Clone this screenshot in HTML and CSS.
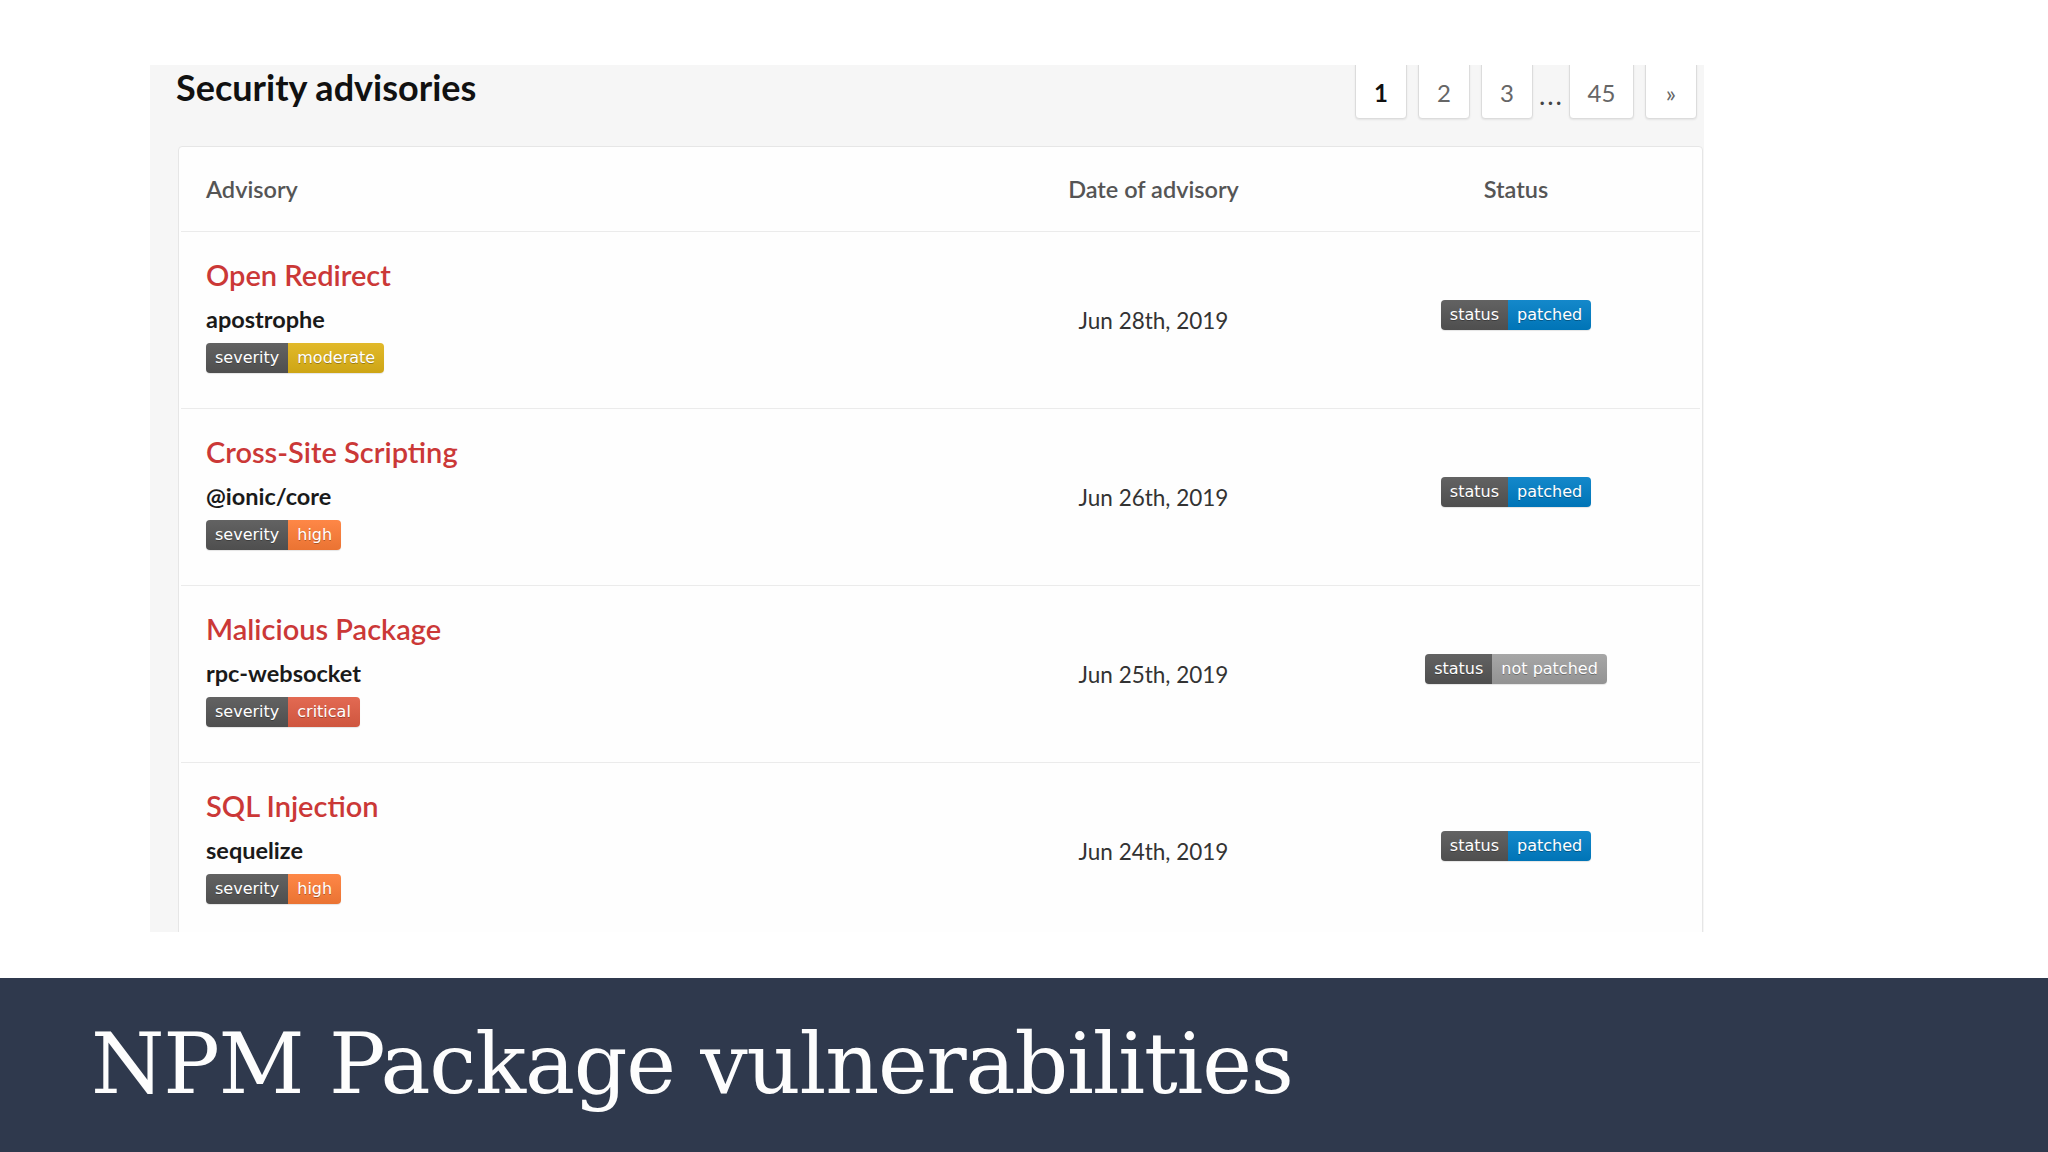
FILE: index.html
```html
<!DOCTYPE html>
<html lang="en">
<head>
<meta charset="utf-8">
<title>NPM Package vulnerabilities</title>
<link rel="stylesheet" href="styles.css">
</head>
<body>
<div class="stage">
  <section class="panel">
    <div class="panel-head">
      <h1 class="title">Security advisories</h1>
      <nav class="pager">
        <a class="page current">1</a>
        <a class="page">2</a>
        <a class="page">3</a>
        <span class="ellipsis">...</span>
        <a class="page wide">45</a>
        <a class="page">»</a>
      </nav>
    </div>
    <div class="card">
      <div class="row head">
        <div class="cell adv">Advisory</div>
        <div class="cell center">Date of advisory</div>
        <div class="cell center">Status</div>
      </div>

      <div class="row item">
        <div class="cell adv">
          <div class="adv-title">Open Redirect</div>
          <div class="adv-pkg">apostrophe</div>
          <span class="badge"><span class="badge-key">severity</span><span class="badge-val moderate">moderate</span></span>
        </div>
        <div class="cell center date">Jun 28th, 2019</div>
        <div class="cell center"><span class="badge status"><span class="badge-key">status</span><span class="badge-val patched">patched</span></span></div>
      </div>

      <div class="row item">
        <div class="cell adv">
          <div class="adv-title">Cross-Site Scripting</div>
          <div class="adv-pkg">@ionic/core</div>
          <span class="badge"><span class="badge-key">severity</span><span class="badge-val high">high</span></span>
        </div>
        <div class="cell center date">Jun 26th, 2019</div>
        <div class="cell center"><span class="badge status"><span class="badge-key">status</span><span class="badge-val patched">patched</span></span></div>
      </div>

      <div class="row item">
        <div class="cell adv">
          <div class="adv-title">Malicious Package</div>
          <div class="adv-pkg">rpc-websocket</div>
          <span class="badge"><span class="badge-key">severity</span><span class="badge-val critical">critical</span></span>
        </div>
        <div class="cell center date">Jun 25th, 2019</div>
        <div class="cell center"><span class="badge status"><span class="badge-key">status</span><span class="badge-val notpatched">not patched</span></span></div>
      </div>

      <div class="row item">
        <div class="cell adv">
          <div class="adv-title">SQL Injection</div>
          <div class="adv-pkg">sequelize</div>
          <span class="badge"><span class="badge-key">severity</span><span class="badge-val high">high</span></span>
        </div>
        <div class="cell center date">Jun 24th, 2019</div>
        <div class="cell center"><span class="badge status"><span class="badge-key">status</span><span class="badge-val patched">patched</span></span></div>
      </div>
    </div>
  </section>
</div>
<footer class="caption">NPM Package vulnerabilities</footer>
</body>
</html>
```

FILE: styles.css
```css
html, body {
  margin: 0;
  padding: 0;
}
body {
  width: 2048px;
  height: 1152px;
  overflow: hidden;
  background: #ffffff;
  display: flex;
  flex-direction: column;
  font-family: Lato, "Noto Sans", sans-serif;
}
.stage {
  height: 978px;
  padding: 65px 0 0 150px;
  box-sizing: border-box;
}
.panel {
  width: 1554px;
  height: 867px;
  background: #f6f6f6;
  overflow: hidden;
}
.panel-head {
  height: 81px;
  display: flex;
  justify-content: space-between;
  align-items: flex-start;
}
.title {
  margin: 2px 0 0 26px;
  font-size: 36px;
  line-height: 40px;
  font-weight: 700;
  color: #111;
}
.pager {
  display: flex;
  align-items: flex-start;
  margin-right: 7px;
}
.page {
  width: 52px;
  height: 58px;
  margin-top: -4px;
  margin-left: 11px;
  box-sizing: border-box;
  border: 1px solid #dcdcdc;
  border-radius: 4px;
  background: #fff;
  box-shadow: 0 1px 2px rgba(0,0,0,0.08);
  display: flex;
  align-items: center;
  justify-content: center;
  padding-top: 4px;
  font-size: 24px;
  color: #666;
}
.page.current {
  color: #111;
  font-weight: 700;
}
.page.wide {
  width: 65px;
  margin-left: 5px;
}
.ellipsis {
  margin-left: 6px;
  height: 54px;
  display: flex;
  align-items: center;
  padding-top: 4px;
  box-sizing: border-box;
  font-size: 27px;
  letter-spacing: 2px;
  color: #444;
}
.card {
  margin-left: 28px;
  width: 1525px;
  box-sizing: border-box;
  border: 1px solid #e6e6e6;
  border-radius: 4px;
  background: #fefefe;
}
.row {
  display: grid;
  grid-template-columns: 794px 357px 1fr;
  margin: 0 2px;
}
.row.head {
  height: 84px;
  border-bottom: 1px solid #ebebeb;
  align-items: center;
  font-size: 23.5px;
  font-weight: 600;
  color: #555;
}
.row.head .adv {
  padding-left: 25px;
}
.row.item {
  height: 176px;
  border-bottom: 1px solid #ebebeb;
}
.cell.center {
  display: flex;
  align-items: center;
  justify-content: center;
}
.row.item .adv {
  padding: 26px 0 0 25px;
}
.adv-title {
  font-size: 29px;
  line-height: 34px;
  font-weight: 600;
  color: #cb3837;
}
.adv-pkg {
  margin-top: 13px;
  font-size: 23.5px;
  line-height: 28px;
  font-weight: 700;
  color: #1a1a1a;
}
.date {
  font-size: 22.5px;
  color: #333;
}
.badge {
  display: inline-flex;
  margin-top: 10px;
  height: 30px;
  border-radius: 4px;
  overflow: hidden;
  font-family: "DejaVu Sans", Verdana, sans-serif;
  font-size: 16px;
  line-height: 30px;
  color: #fff;
  text-shadow: 0 1px 0 rgba(1,1,1,0.3);
  box-shadow: 0 1px 1px rgba(0,0,0,0.1);
}
.badge.status {
  margin-top: 0;
  margin-bottom: 10px;
}
.badge-key,
.badge-val {
  padding: 0 9px;
  background-image: linear-gradient(rgba(255,255,255,0.08), rgba(0,0,0,0.08));
}
.badge-key {
  background-color: #555;
}
.moderate { background-color: #dfb317; }
.high { background-color: #fe7d37; }
.critical { background-color: #e05d44; }
.patched { background-color: #007ec6; }
.notpatched { background-color: #9f9f9f; }
.caption {
  height: 174px;
  box-sizing: border-box;
  background: #2f394d;
  color: #fdfdfd;
  padding: 44px 0 0 91px;
  font-family: "DejaVu Serif", "Liberation Serif", serif;
  font-size: 84px;
  line-height: 84px;
  letter-spacing: -1.2px;
}
```
